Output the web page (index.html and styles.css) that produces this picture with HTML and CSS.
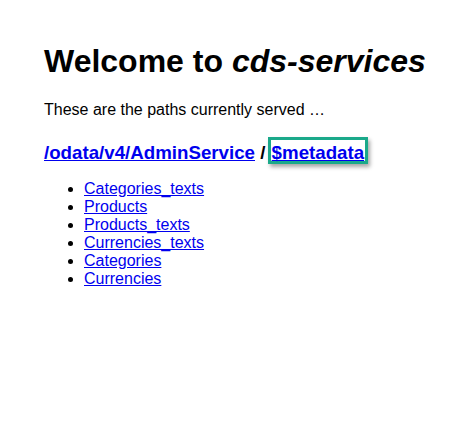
FILE: index.html
```html
<!DOCTYPE html>
<html>
<head>
<meta charset="utf-8">
<link rel="stylesheet" href="styles.css">
</head>
<body>
<h1 class="title">Welcome to <i>cds-services</i></h1>
<p class="intro">These are the paths currently served …</p>
<h2 class="service"><a href="#">/odata/v4/AdminService</a> / <span class="hl"><a href="#">$metadata</a></span></h2>
<ul class="entities">
<li><a href="#">Categories_texts</a></li>
<li><a href="#">Products</a></li>
<li><a href="#">Products_texts</a></li>
<li><a href="#">Currencies_texts</a></li>
<li><a href="#">Categories</a></li>
<li><a href="#">Currencies</a></li>
</ul>
</body>
</html>
```
FILE: styles.css
```css
body {
  margin: 0;
  padding: 1px 44px;
  font-family: "Liberation Sans", Arial, sans-serif;
  font-size: 16px;
  color: #000;
  background: #fff;
}
.title {
  font-size: 32px;
  margin: 42px 0 21px;
}
.intro {
  margin: 0 0 18px;
}
.service {
  font-size: 18.72px;
  margin: 0 0 16px;
}
.service a {
  color: #0000ee;
}
.hl {
  display: inline-block;
  margin-left: -3px;
  border: 3px solid #1aa98a;
  padding: 4px 1px 0;
  line-height: 17px;
  box-shadow: 2px 3px 4px rgba(0, 0, 0, 0.35);
}
.entities {
  margin: 0;
  padding-left: 40px;
}
.entities a {
  color: #0000ee;
}
```
